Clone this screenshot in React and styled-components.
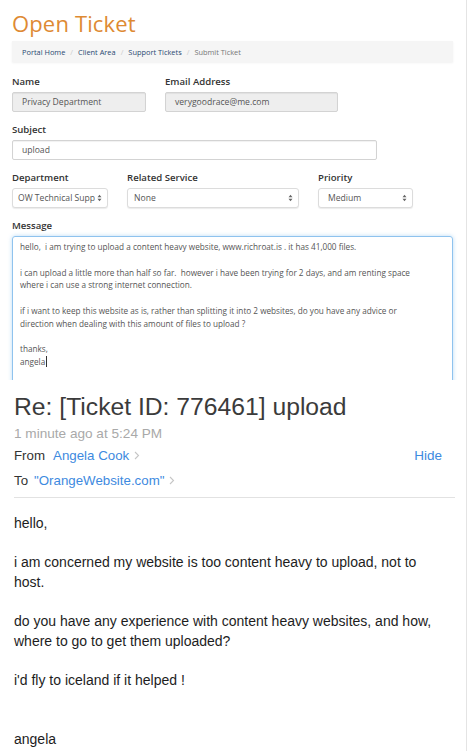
import React from 'react'
import styled, { createGlobalStyle } from 'styled-components'

const GlobalStyle = createGlobalStyle`
  html, body {
    margin: 0;
    padding: 0;
    background: #fff;
  }
  * { box-sizing: border-box; }
`

const Page = styled.div`
  width: 467px;
  height: 751px;
  overflow: hidden;
  border-right: 1px solid #e4e4e4;
  background: #fff;
`

/* ---------- ticket form ---------- */

const FormArea = styled.section`
  height: 380px;
  overflow: hidden;
  padding: 0 13px 0 12px;
  font-family: "Open Sans", "Liberation Sans", sans-serif;
  color: #333;
`

const Title = styled.h1`
  margin: 0;
  padding-top: 9px;
  font-family: "Open Sans", sans-serif;
  font-weight: 400;
  font-size: 22px;
  line-height: 28px;
  color: #de8a33;
  letter-spacing: 0.15px;
`

const Breadcrumb = styled.ol`
  display: flex;
  align-items: center;
  list-style: none;
  margin: 4px 0 13px;
  padding: 0 10px;
  height: 21px;
  background: #f5f5f5;
  box-shadow: 0 1px 2px rgba(0, 0, 0, 0.06);
  font-size: 7.4px;

  li + li::before {
    content: '/';
    color: #ccc;
    padding: 0 5px;
  }
`

const Crumb = styled.li`
  color: ${p => (p.$active ? '#777' : '#2a4a72')};
`

const Row = styled.div`
  display: flex;
  gap: ${p => p.$gap || 19}px;
  margin-bottom: 11px;
`

const Field = styled.div`
  display: flex;
  flex-direction: column;
  width: ${p => p.$w}px;
`

const Label = styled.label`
  display: block;
  height: 14px;
  line-height: 14px;
  margin-bottom: 3px;
  font-size: 9.6px;
  font-weight: 600;
  color: #333;
`

const Input = styled.div`
  height: 20px;
  display: flex;
  align-items: center;
  padding: 0 9px;
  border: 1px solid #d3d3d3;
  border-radius: 2px;
  background: ${p => (p.$disabled ? '#eeeeee' : '#fff')};
  box-shadow: inset 0 1px 1px rgba(0, 0, 0, 0.06);
  font-size: 8.6px;
  color: #555;
  white-space: nowrap;
  overflow: hidden;
`

const Select = styled.div`
  height: 20px;
  display: flex;
  align-items: center;
  justify-content: space-between;
  padding: 0 5px 0 ${p => p.$pad || 6}px;
  border: 1px solid #dcdcdc;
  border-radius: 3px;
  background: #fff;
  box-shadow: 0 1px 1px rgba(0, 0, 0, 0.08);
  font-size: 8.6px;
  color: #555;
  white-space: nowrap;
  overflow: hidden;
`

const Arrows = () => (
  <svg width="5" height="8" viewBox="0 0 5 8">
    <path d="M0.5 3.2 L2.5 0.8 L4.5 3.2 Z M0.5 4.8 L2.5 7.2 L4.5 4.8 Z" fill="#666" />
  </svg>
)

const MessageBox = styled.div`
  height: 170px;
  padding: 4px 7px;
  border: 1px solid #8fc3ee;
  border-radius: 3px;
  box-shadow: 0 0 4px rgba(102, 175, 233, 0.45);
  font-size: 8.2px;
  line-height: 12.8px;
  color: #555;
  white-space: pre;
`

const Caret = styled.span`
  display: inline-block;
  width: 1px;
  height: 11px;
  margin-left: 1px;
  vertical-align: -2px;
  background: #333;
`

/* ---------- mail view ---------- */

const Mail = styled.section`
  padding: 13px 11px 0 14px;
  font-family: "Liberation Sans", Arial, sans-serif;
  color: #222;
`

const Subject = styled.h2`
  margin: 0;
  font-size: 24.7px;
  font-weight: 400;
  line-height: 28px;
  color: #3b3b3b;
`

const Stamp = styled.div`
  margin-top: 3px;
  height: 19px;
  line-height: 19px;
  font-size: 13.6px;
  color: #a9a9a9;
`

const HeaderRow = styled.div`
  display: flex;
  align-items: center;
  height: 25px;
  font-size: 13.3px;
  color: #333;
`

const Who = styled.span`
  margin-left: ${p => p.$ml || 6}px;
  color: #3d8ae0;
`

const Chevron = () => (
  <svg width="6" height="9" viewBox="0 0 6 9" style={{ marginLeft: 5 }}>
    <path d="M1 1 L4.5 4.5 L1 8" fill="none" stroke="#c6c6c6" strokeWidth="1.1" />
  </svg>
)

const Hide = styled.span`
  margin-left: auto;
  margin-right: 13px;
  color: #3d8ae0;
  font-size: 13.5px;
`

const Divider = styled.hr`
  margin: 4px 0 0;
  border: 0;
  border-top: 1px solid #e2e2e2;
`

const Body = styled.div`
  padding-top: 16px;
  font-size: 14px;
  line-height: 19.6px;
  color: #1d1d1d;
`

const Para = styled.p`
  margin: 0 0 ${p => (p.$gap || 1) * 19.6}px;
`

const messageText = `hello,  i am trying to upload a content heavy website, www.richroat.is . it has 41,000 files.

i can upload a little more than half so far.  however i have been trying for 2 days, and am renting space
where i can use a strong internet connection.

if i want to keep this website as is, rather than splitting it into 2 websites, do you have any advice or
direction when dealing with this amount of files to upload ?

thanks,
angela`

const App = () => (
  <Page>
    <GlobalStyle />
    <FormArea>
      <Title>Open Ticket</Title>
      <Breadcrumb>
        <Crumb>Portal Home</Crumb>
        <Crumb>Client Area</Crumb>
        <Crumb>Support Tickets</Crumb>
        <Crumb $active>Submit Ticket</Crumb>
      </Breadcrumb>

      <Row>
        <Field $w={134}>
          <Label>Name</Label>
          <Input $disabled>Privacy Department</Input>
        </Field>
        <Field $w={173}>
          <Label>Email Address</Label>
          <Input $disabled>verygoodrace@me.com</Input>
        </Field>
      </Row>

      <Row>
        <Field $w={365}>
          <Label>Subject</Label>
          <Input>upload</Input>
        </Field>
      </Row>

      <Row>
        <Field $w={96}>
          <Label>Department</Label>
          <Select $pad={5}>OW Technical Supp<Arrows /></Select>
        </Field>
        <Field $w={172}>
          <Label>Related Service</Label>
          <Select>None<Arrows /></Select>
        </Field>
        <Field $w={95}>
          <Label>Priority</Label>
          <Select $pad={9}>Medium<Arrows /></Select>
        </Field>
      </Row>

      <Field>
        <Label>Message</Label>
        <MessageBox>
          {messageText}
          <Caret />
        </MessageBox>
      </Field>
    </FormArea>

    <Mail>
      <Subject>Re: [Ticket ID: 776461] upload</Subject>
      <Stamp>1 minute ago at 5:24 PM</Stamp>
      <HeaderRow>
        From<Who $ml={8}>Angela Cook</Who><Chevron />
        <Hide>Hide</Hide>
      </HeaderRow>
      <HeaderRow>
        To<Who>"OrangeWebsite.com"</Who><Chevron />
      </HeaderRow>
      <Divider />
      <Body>
        <Para $gap={1}>hello,</Para>
        <Para>i am concerned my website is too content heavy to upload, not to<br />host.</Para>
        <Para>do you have any experience with content heavy websites, and how,<br />where to go to get them uploaded?</Para>
        <Para $gap={2}>i'd fly to iceland if it helped !</Para>
        <Para>angela</Para>
      </Body>
    </Mail>
  </Page>
)

export default App
